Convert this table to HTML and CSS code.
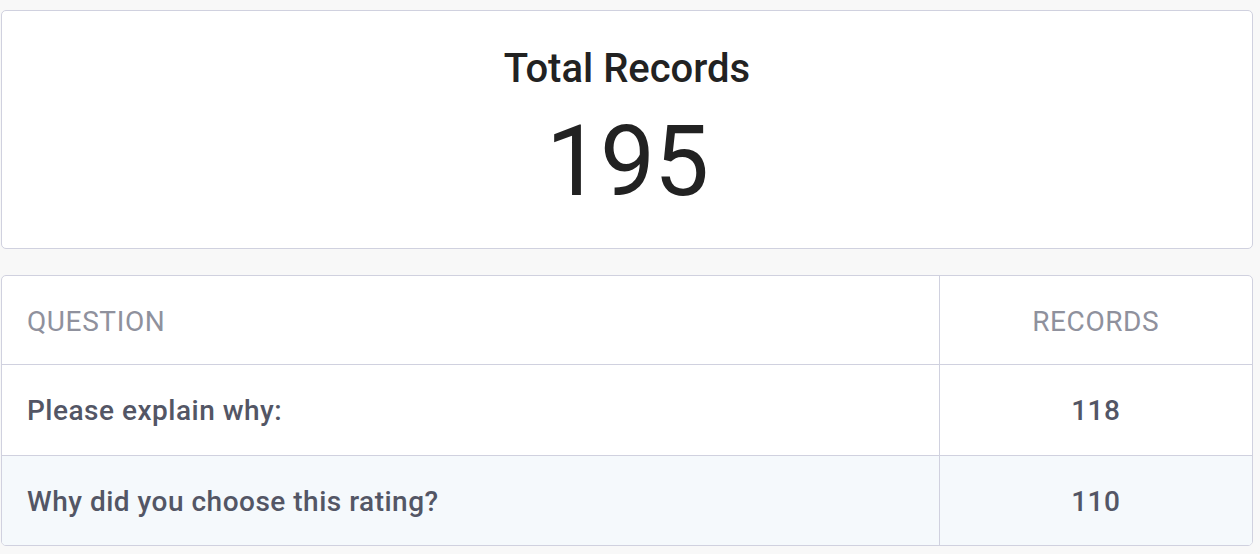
FILE: index.html
```html
<!DOCTYPE html>
<html>
<head>
<meta charset="utf-8">
<link rel="stylesheet" href="styles.css">
</head>
<body>
<div class="page">
  <section class="summary-card">
    <h2 class="summary-title">Total Records</h2>
    <div class="summary-value">195</div>
  </section>
  <div class="table-card">
    <table class="records-table">
      <thead>
        <tr>
          <th class="col-question">Question</th>
          <th class="col-records">Records</th>
        </tr>
      </thead>
      <tbody>
        <tr>
          <td class="col-question">Please explain why:</td>
          <td class="col-records">118</td>
        </tr>
        <tr class="row-alt">
          <td class="col-question">Why did you choose this rating?</td>
          <td class="col-records">110</td>
        </tr>
      </tbody>
    </table>
  </div>
</div>
</body>
</html>
```

FILE: styles.css
```css
html, body {
  margin: 0;
  padding: 0;
  background: #f8f8f8;
}
body {
  font-family: Roboto, "Liberation Sans", Arial, sans-serif;
}
.page {
  padding: 10px 7px 0 1px;
  display: flex;
  flex-direction: column;
  gap: 26px;
}
.summary-card {
  height: 239px;
  box-sizing: border-box;
  background: #fff;
  border: 1px solid #d0d1df;
  border-radius: 5px;
  display: flex;
  flex-direction: column;
  align-items: center;
  padding-top: 38px;
}
.summary-title {
  margin: 0;
  font-size: 40px;
  font-weight: 500;
  color: #222;
  line-height: 1;
}
.summary-value {
  margin-top: 24px;
  font-size: 98px;
  font-weight: 400;
  letter-spacing: -1px;
  color: #222;
  line-height: 1;
}
.table-card {
  background: #fff;
  border: 1px solid #d0d1df;
  border-radius: 5px;
  overflow: hidden;
}
.records-table {
  width: 100%;
  border-collapse: collapse;
}
.records-table th,
.records-table td {
  box-sizing: border-box;
  padding: 0 25px;
  font-size: 28px;
  vertical-align: middle;
}
.records-table th {
  height: 88px;
  padding-top: 4px;
  font-weight: 400;
  text-transform: uppercase;
  color: #8f919d;
  letter-spacing: 0.6px;
}
.records-table td {
  height: 91px;
  padding-top: 2px;
  font-weight: 500;
  color: #535665;
  letter-spacing: 0.5px;
  border-top: 1px solid #d0d1df;
}
.records-table .row-alt td {
  height: 90px;
}
.col-question {
  text-align: left;
}
.col-records {
  width: 313px;
  text-align: center;
  border-left: 1px solid #d0d1df;
}
.row-alt td {
  background: #f5f9fc;
}
```
